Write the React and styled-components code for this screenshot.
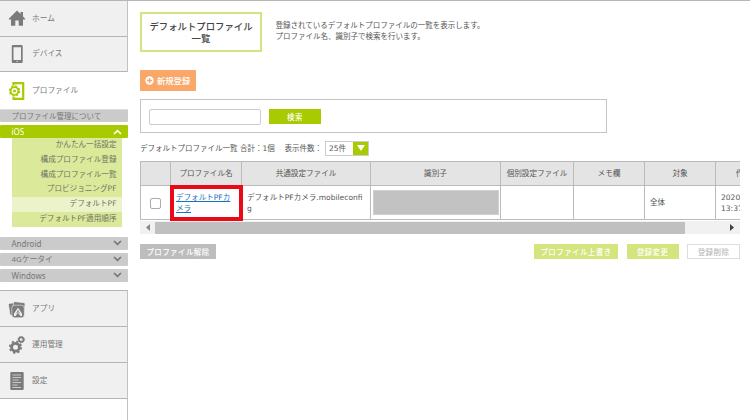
import React from 'react';
import styled, { createGlobalStyle } from 'styled-components';

const GlobalStyle = createGlobalStyle`
  * {
    box-sizing: border-box;
  }

  body {
    margin: 0;
    background: #fff;
    color: #666;
    font-family: 'Noto Sans', 'Noto Sans CJK JP', sans-serif;
    font-size: 7.5px;
    line-height: 11px;
    overflow: hidden;
  }
`;

const Page = styled.div`
  display: flex;
  width: 750px;
  height: 420px;
  border-top: 1px solid #b5b5b5;
  overflow: hidden;
`;

const Sidebar = styled.aside`
  display: flex;
  flex-direction: column;
  flex: none;
  width: 128px;
`;

const NavGroup = styled.div`
  height: ${props => props.$height};
  border-right: 1px solid #c2c2c2;
  border-top: ${props => (props.$topLine ? '1px solid #b5b5b5' : 'none')};
`;

const NavItem = styled.div`
  display: flex;
  align-items: center;
  height: ${props => props.$height || '36px'};
  padding-left: 8px;
  background: ${props => (props.$active ? '#fff' : '#f0f0f0')};
  border-bottom: 1px solid ${props => (props.$active ? '#ddd' : '#b5b5b5')};
  font-size: 7.7px;
  color: #777;

  svg {
    flex: none;
    width: 18px;
    height: 18px;
    margin-right: 6px;
  }
`;

const SubNav = styled.div`
  height: 180px;
`;

const Bar = styled.div`
  display: flex;
  align-items: center;
  justify-content: space-between;
  height: ${props => props.$height || '13px'};
  width: 127.5px;
  margin-bottom: ${props => props.$gap || '3px'};
  padding: 0 6px 0 11.5px;
  border-radius: 1px;
  background: ${props => (props.$open ? '#a7cb00' : '#cbcbcb')};
  color: ${props => (props.$open ? '#fff' : '#777')};
  font-size: ${props => props.$size || '7.5px'};

  svg {
    width: 9px;
    height: 6px;
  }
`;

const SubMenu = styled.ul`
  width: 110px;
  height: 89px;
  margin: 0 0 9.5px 12px;
  padding: 0;
  list-style: none;
  background: #dbe99a;
`;

const SubMenuItem = styled.li`
  height: 14.8px;
  padding-right: 5.5px;
  line-height: 13px;
  text-align: right;
  font-family: 'DejaVu Sans', 'Noto Sans CJK JP', sans-serif;
  font-size: 7.6px;
  color: #6f7360;
  background: ${props => (props.$active ? '#ecf3cb' : 'transparent')};
`;

const Main = styled.main`
  flex: 1;
  min-width: 0;
  padding: 11px 10px 0 12px;
`;

const Intro = styled.div`
  display: flex;
  height: 40px;
`;

const Title = styled.h1`
  width: 122px;
  height: 40px;
  margin: 0;
  padding-top: 7px;
  border: 2px solid #d2e47b;
  text-align: center;
  font-size: 9.4px;
  font-weight: 500;
  line-height: 11.5px;
  color: #444;
`;

const Description = styled.p`
  margin: 8px 0 0 13.5px;
  color: #555;
  font-size: 7.5px;
`;

const AddButton = styled.button`
  display: flex;
  align-items: center;
  width: 56px;
  height: 21px;
  margin: 18px 0 8px;
  padding: 0 0 1px 5px;
  border: 0;
  border-radius: 1px;
  background: #f9a869;
  color: #fff;
  font: 500 8.3px 'Noto Sans CJK JP', sans-serif;
  white-space: nowrap;

  svg {
    flex: none;
    width: 9px;
    height: 9px;
    margin-right: 3px;
  }
`;

const SearchBox = styled.div`
  display: flex;
  align-items: flex-start;
  width: 467px;
  height: 34px;
  padding: 9px 8px;
  border: 1px solid #c4c4c4;
`;

const SearchInput = styled.input`
  width: 112px;
  height: 16px;
  margin-right: 8px;
  border: 1px solid #ccc;
  border-radius: 2px;
`;

const Button = styled.button`
  width: ${props => props.$width};
  height: ${props => props.$height || '15px'};
  padding: 0 0 1px;
  border: 1px solid ${props => props.$border || props.$bg};
  background: ${props => props.$bg};
  color: ${props => props.$color || '#fff'};
  font: 500 7.5px 'Noto Sans CJK JP', sans-serif;
  letter-spacing: 0.4px;
  line-height: 11px;
  white-space: nowrap;
`;

const ListInfo = styled.div`
  display: flex;
  align-items: center;
  height: 16px;
  margin: 7px 0 5px;
  color: #555;
  white-space: pre;
  font-family: 'DejaVu Sans', 'Noto Sans CJK JP', sans-serif;
`;

const InfoText = styled.span`
  width: ${props => props.$width};
`;

const PageSize = styled.div`
  display: flex;
  align-items: center;
  justify-content: space-between;
  width: 44px;
  height: 15px;
  padding-left: 3px;
  border: 1px solid #ccc;
`;

const SelectArrow = styled.span`
  display: flex;
  align-items: center;
  justify-content: center;
  width: 15px;
  height: 13px;
  background: #a7cb00;

  svg {
    width: 8px;
    height: 6px;
  }
`;

const TableScroll = styled.div`
  width: 600px;
  height: 60px;
  overflow: hidden;
`;

const Table = styled.table`
  table-layout: fixed;
  width: 646px;
  border-collapse: collapse;
  border: 1px solid #bbb;
`;

const HeadCell = styled.th`
  width: ${props => props.$width};
  height: 24px;
  padding: 0;
  border: 1px solid #bbb;
  background: #e4e4e4;
  color: #555;
  font-size: 7.6px;
  font-weight: 400;
  white-space: nowrap;
`;

const Cell = styled.td`
  height: 34px;
  padding: ${props => props.$padding || '0 5px'};
  border: 1px solid #bbb;
  color: #555;
  font-family: 'DejaVu Sans', 'Noto Sans CJK JP', sans-serif;
  font-size: 7.55px;
  vertical-align: middle;
  line-height: 11px;
  white-space: nowrap;
`;

const LinkCell = styled(Cell)`
  outline: 4px solid #e90a18;
  outline-offset: -3px;
  position: relative;
`;

const ProfileLink = styled.a`
  color: #1b74bb;
  text-decoration: underline;
`;

const Checkbox = styled.span`
  display: block;
  width: 11px;
  height: 11px;
  margin: 1px auto 0;
  border: 1px solid #aaa;
  border-radius: 2px;
  background: #fff;
`;

const Masked = styled.div`
  width: 126px;
  height: 25px;
  margin: 0 auto;
  border: 1px solid #cfcfcf;
  background: #c2c2c2;
`;

const ScrollBar = styled.div`
  display: flex;
  align-items: center;
  justify-content: space-between;
  height: 13px;
  padding: 0 5px;
  background: #f1f1f1;

  svg {
    width: 5px;
    height: 7px;
  }
`;

const ScrollThumb = styled.div`
  width: 530px;
  height: 12px;
  margin: 0 auto 0 5px;
  background: #c0c0c0;
`;

const Actions = styled.div`
  display: flex;
  align-items: center;
  gap: 8.5px;
  width: 600px;
  margin-top: 10px;

  button:first-child {
    margin-right: auto;
  }
`;

const HomeIcon = () => (
  <svg viewBox="0 0 18 18" fill="#7b7b7b">
    <path d="M9 1.500 .8 9.800V10.500H3v6.300h4.300V11.500h3.400v5.300H15v-6.300h2.200v-.7L15 7.500V3h-2.500v2z" />
  </svg>
);

const DeviceIcon = () => (
  <svg viewBox="0 0 18 18">
    <path fill="#7b7b7b" fillRule="evenodd" d="M5 0h8.500q1.200 0 1.200 1.200v15.600q0 1.200-1.200 1.200H5q-1.200 0-1.200-1.200V1.200Q3.800 0 5 0zM5.500 2.200v12.800h7.500V2.200z" />
    <circle cx="9.200" cy="16.400" r=".6" fill="#eee" />
  </svg>
);

const ProfileIcon = () => (
  <svg viewBox="0 0 18 18" fill="none" stroke="#a7cb00">
    <path d="M5.500 3.500V1.200h9.700v15.600H5.500V15" strokeWidth="2.200" />
    <circle cx="6.500" cy="9" r="5" fill="#fff" strokeWidth="1.400" strokeDasharray="1.960 1.966" />
    <circle cx="6.500" cy="9" r="3.900" fill="#fff" strokeWidth="1.900" />
    <circle cx="6.500" cy="9" r="1.500" fill="#a7cb00" stroke="none" />
  </svg>
);

const AppIcon = () => (
  <svg viewBox="0 0 18 18">
    <g fill="#7b7b7b" stroke="#f0f0f0" strokeWidth=".6">
      <rect x="1.200" y="3" width="9" height="12" rx="1.200" transform="rotate(-9 5 9)" />
      <rect x="5" y="2.200" width="11.500" height="12" rx="1.200" transform="rotate(7 11 8)" />
      <rect x="3.800" y="5.200" width="12.500" height="12.500" rx="3" />
    </g>
    <path d="M10 7.800 6 13.500V16h1.600L10 12.800l2.400 3.200H14v-2.500z" fill="#f0f0f0" />
    <path d="M10 9.800v3.200M8.200 13.500 10 11l1.800 2.500" fill="none" stroke="#7b7b7b" strokeWidth=".7" />
  </svg>
);

const GearsIcon = () => (
  <svg viewBox="0 0 18 18" fill="none" stroke="#7b7b7b">
    <circle cx="7.500" cy="11.200" r="5.700" strokeWidth="1.800" strokeDasharray="2.240 2.237" />
    <circle cx="7.500" cy="11.200" r="3.900" strokeWidth="2.800" />
    <circle cx="13.200" cy="3.600" r="3.200" strokeWidth="1" strokeDasharray="1.300 1.213" />
    <circle cx="13.200" cy="3.600" r="2.300" strokeWidth="1.700" />
  </svg>
);

const SettingsIcon = () => (
  <svg viewBox="0 0 18 18">
    <rect x="2.300" width="13.400" height="18" rx="1" fill="#7b7b7b" />
    <path d="M4.500 3h8.500M4.500 5.500h8.500M4.500 8h6M4.500 10.500h8.500M4.500 13h5M4.500 15.500h8.500" stroke="#ddd" strokeWidth=".8" />
  </svg>
);

const Chevron = ({ up, color }) => (
  <svg viewBox="0 0 9 6" fill="none" stroke={color || '#777'} strokeWidth="1.7">
    <path d={up ? 'M1 5 4.5 1.700 8 5' : 'M1 1 4.5 4.300 8 1'} />
  </svg>
);

const subMenu = [
  'かんたん一括設定',
  '構成プロファイル登録',
  '構成プロファイル一覧',
  'プロビジョニングPF',
  'デフォルトPF',
  'デフォルトPF適用順序',
];

const columns = [
  { label: '', width: '30px' },
  { label: 'プロファイル名', width: '71px' },
  { label: '共通設定ファイル', width: '129px' },
  { label: '識別子', width: '130px' },
  { label: '個別設定ファイル', width: '73px' },
  { label: 'メモ欄', width: '71px' },
  { label: '対象', width: '71px' },
  { label: '作成日時', width: '71px' },
];

const App = () => (
  <>
    <GlobalStyle />
    <Page>
      <Sidebar>
        <NavGroup $height="71px">
          <NavItem $height="35.500px"><HomeIcon />ホーム</NavItem>
          <NavItem $height="35.500px"><DeviceIcon />デバイス</NavItem>
        </NavGroup>
        <NavItem $active $height="38px"><ProfileIcon />プロファイル</NavItem>
        <SubNav>
          <Bar $height="12px">プロファイル管理について</Bar>
          <Bar $open $size="8px" $gap="0">iOS<Chevron up color="#fff" /></Bar>
          <SubMenu>
            {subMenu.map(label => (
              <SubMenuItem key={label} $active={label === 'デフォルトPF'}>{label}</SubMenuItem>
            ))}
          </SubMenu>
          <Bar $size="8px">Android<Chevron /></Bar>
          <Bar $size="7.800px">4Gケータイ<Chevron /></Bar>
          <Bar $size="8px">Windows<Chevron /></Bar>
        </SubNav>
        <NavGroup $height="130px" $topLine>
          <NavItem><AppIcon />アプリ</NavItem>
          <NavItem><GearsIcon />運用管理</NavItem>
          <NavItem><SettingsIcon />設定</NavItem>
        </NavGroup>
      </Sidebar>

      <Main>
        <Intro>
          <Title>デフォルトプロファイル<br />一覧</Title>
          <Description>
            登録されているデフォルトプロファイルの一覧を表示します。<br />
            プロファイル名、識別子で検索を行います。
          </Description>
        </Intro>

        <AddButton>
          <svg viewBox="0 0 9 9">
            <circle cx="4.500" cy="4.500" r="4.200" fill="#fff" />
            <path d="M4.500 2v5M2 4.500h5" stroke="#f9a869" strokeWidth="1.400" />
          </svg>
          新規登録
        </AddButton>

        <SearchBox>
          <SearchInput />
          <Button $bg="#a7cb00" $width="52px" $height="15px">検索</Button>
        </SearchBox>

        <ListInfo>
          <InfoText $width="144.500px">デフォルトプロファイル一覧 合計：1個</InfoText>
          <InfoText $width="40.500px">表示件数：</InfoText>
          <PageSize>
            25件
            <SelectArrow>
              <svg viewBox="0 0 8 6"><path d="M0 0h8L4 6z" fill="#fff" /></svg>
            </SelectArrow>
          </PageSize>
        </ListInfo>

        <TableScroll>
          <Table>
            <thead>
              <tr>
                {columns.map(col => (
                  <HeadCell key={col.label} $width={col.width}>{col.label}</HeadCell>
                ))}
              </tr>
            </thead>
            <tbody>
              <tr>
                <Cell><Checkbox /></Cell>
                <LinkCell><ProfileLink>デフォルトPFカ<br />メラ</ProfileLink></LinkCell>
                <Cell>デフォルトPFカメラ.mobileconfi<br />g</Cell>
                <Cell $padding="0"><Masked /></Cell>
                <Cell />
                <Cell />
                <Cell>全体</Cell>
                <Cell>2020/09/03<br />13:37:20</Cell>
              </tr>
            </tbody>
          </Table>
        </TableScroll>
        <ScrollBar>
          <svg viewBox="0 0 5 7"><path d="M5 0v7L1 3.500z" fill="#888" /></svg>
          <ScrollThumb />
          <svg viewBox="0 0 5 7"><path d="M0 0v7l4-3.500z" fill="#444" /></svg>
        </ScrollBar>

        <Actions>
          <Button $bg="#bdbdbd" $width="76px">プロファイル解除</Button>
          <Button $bg="#d3e57c" $width="84px">プロファイル上書き</Button>
          <Button $bg="#d3e57c" $width="52px">登録変更</Button>
          <Button $bg="#fff" $border="#ddd" $color="#bbb" $width="53px">登録削除</Button>
        </Actions>
      </Main>
    </Page>
  </>
);

export default App;
